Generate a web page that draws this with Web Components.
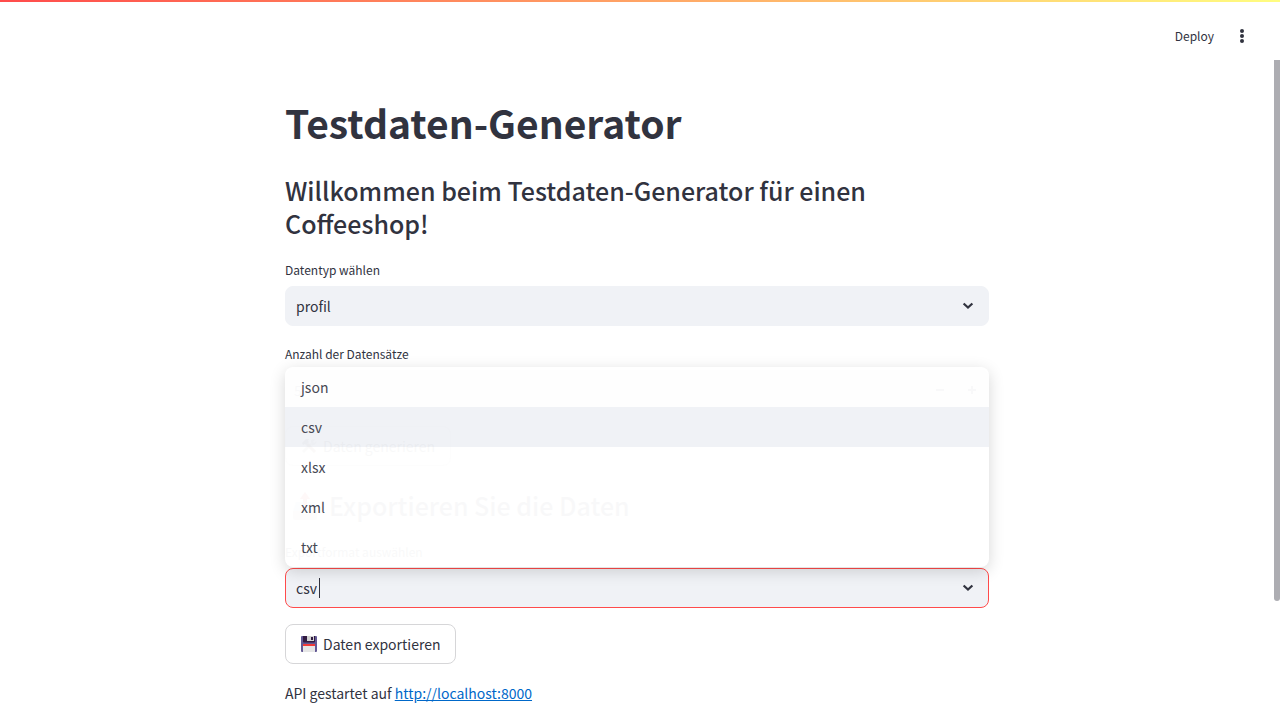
<!DOCTYPE html>
<html lang="de">
<head>
<meta charset="utf-8">
<meta name="viewport" content="width=device-width, initial-scale=1">
<title>Testdaten-Generator</title>
<style>
  :root {
    --ink: #31333f;
    --field: #f0f2f6;
    --accent: #ff4b4b;
    --size-text: 14px;
    --size-small: 12px;
  }
  body {
    margin: 0;
    background: #fff;
    color: var(--ink);
    font-family: "Noto Sans CJK SC", "Noto Sans", sans-serif;
    font-size: var(--size-text);
    line-height: 26px;
  }
</style>
</head>
<body>
<app-shell>
  <app-toolbar slot="toolbar"></app-toolbar>
  <page-heading level="1">Testdaten-Generator</page-heading>
  <page-heading level="3">Willkommen beim Testdaten-Generator für einen Coffeeshop!</page-heading>
  <select-field label="Datentyp wählen" value="profil"></select-field>
  <number-field label="Anzahl der Datensätze" value="5"></number-field>
  <action-button icon="tools">Daten generieren</action-button>
  <page-heading level="3" class="section" icon="outbox">Exportieren Sie die Daten</page-heading>
  <combo-field label="Exportformat auswählen" value="csv" options="json,csv,xlsx,xml,txt"></combo-field>
  <action-button icon="floppy">Daten exportieren</action-button>
  <api-note href="http://localhost:8000">API gestartet auf</api-note>
</app-shell>

<script>
const ICONS = {
  chevron: '<svg width="12" height="8" viewBox="0 0 12 8" aria-hidden="true"><path d="M1.600 1.500 6 5.600l4.400-4.100" fill="none" stroke="#31333f" stroke-width="2.200"/></svg>',
  floppy: '<svg width="16" height="16" viewBox="0 0 16 16" aria-hidden="true"><path d="M1 0h14a1 1 0 0 1 1 1v14a1 1 0 0 1-1 1H1a1 1 0 0 1-1-1V1a1 1 0 0 1 1-1z" fill="#635994"/><path d="M2 0h12v5.500a1 1 0 0 1-1 1H3a1 1 0 0 1-1-1z" fill="#321b41"/><path d="M6 0h7v5H6z" fill="#d3d3d3"/><path d="M10 1h2v3h-2z" fill="#321b41"/><path d="M2 8h12v8H2z" fill="#e6e6e6"/><path d="M2 8h12v2H2z" fill="#f03a38"/></svg>',
  tools: '<svg width="16" height="16" viewBox="0 0 16 16" aria-hidden="true"><path d="m2 14 8-8" stroke="#9b9b9b" stroke-width="2.500"/><path d="M10 2.500a4 4 0 0 1 4-1L12 4l1 1 2.500-2a4 4 0 0 1-5 4z" fill="#9b9b9b"/><path d="m6 6 8 8" stroke="#8a5a44" stroke-width="3"/><path d="M1 5 5 1h3L7 3l1 1-3 3-1-1-2 1z" fill="#636363"/></svg>',
  outbox: '<svg width="24" height="28" viewBox="0 0 24 28" aria-hidden="true"><path d="M3 10h18l3 10H0z" fill="#b4d8ef"/><path d="M0 19h7l2 3h6l2-3h7v7a2 2 0 0 1-2 2H2a2 2 0 0 1-2-2z" fill="#c9b9b9"/><path d="M12 0 7 7h3v10h4V7h3z" fill="#f8312f"/></svg>'
};

class Base extends HTMLElement {
  connectedCallback() {
    const root = this.attachShadow({ mode: 'open' });
    root.innerHTML = `<style>*{box-sizing:border-box}${this.styles()}</style>${this.markup()}`;
  }
  attr(name) { return this.getAttribute(name) || ''; }
}

const FIELD = `
  :host { display: block; position: relative; }
  label { display: block; height: 24px; margin-bottom: 4px; font-size: var(--size-small); line-height: 24px; }
  .box { position: relative; display: flex; align-items: center; height: 40px; border: 1px solid var(--field); border-radius: 8px; background: var(--field); }
  select, input { font: inherit; color: inherit; background: none; border: 0; outline: 0; margin: 0; }
`;

customElements.define('app-shell', class extends Base {
  styles() { return `
    :host { display: flex; flex-direction: column; height: 100vh; overflow: hidden; }
    .stripe { flex: none; height: 2px; background: linear-gradient(90deg, #ff4b4b, #fffd80); }
    .body { flex: 1; min-height: 0; display: grid; grid-template-columns: minmax(0, 1fr) 6px; }
    .thumb { height: 82%; border-radius: 0 0 4px 4px; background: #adadb2; }
    main { display: flex; flex-direction: column; gap: 16px; width: 100%; max-width: 736px; margin: 0 auto; padding: 36px 16px 0; box-sizing: border-box; }
    ::slotted(.section) { padding-top: 7px; }
  `; }
  markup() { return `<div class="stripe"></div><slot name="toolbar"></slot>
    <div class="body"><main><slot></slot></main><div class="thumb" aria-hidden="true"></div></div>`; }
});

customElements.define('app-toolbar', class extends Base {
  styles() { return `
    :host { display: flex; justify-content: flex-end; align-items: center; gap: 18px; flex: none; height: 58px; padding: 10px 28px 0 16px; box-sizing: border-box; }
    button { display: flex; align-items: center; justify-content: center; height: 28px; padding: 0; border: 0; background: none; color: inherit; font: inherit; font-size: var(--size-small); line-height: 24px; }
    .menu { width: 20px; }
  `; }
  markup() { return `<button type="button">Deploy</button>
    <button type="button" class="menu" aria-label="Menü"><svg width="4" height="14" viewBox="0 0 4 14" fill="#31333f"><circle cx="2" cy="2" r="2"/><circle cx="2" cy="7" r="2"/><circle cx="2" cy="12" r="2"/></svg></button>`; }
});

customElements.define('page-heading', class extends Base {
  styles() { return `
    :host { display: block; }
    h1, h3 { margin: 0; display: flex; align-items: center; gap: 12px; }
    h1 { font-size: 39px; font-weight: 700; line-height: 53px; padding-bottom: 9px; }
    h3 { font-size: 25px; font-weight: 500; line-height: 33px; padding-bottom: 2px; }
    svg { flex: none; margin-left: 8px; }
  `; }
  markup() { const h = 'h' + this.attr('level'); return `<${h}>${ICONS[this.attr('icon')] || ''}<span><slot></slot></span></${h}>`; }
});

customElements.define('select-field', class extends Base {
  styles() { return FIELD + `
    select { appearance: none; width: 100%; height: 38px; padding: 0 40px 0 10px; }
    svg { position: absolute; right: 14px; pointer-events: none; }
  `; }
  markup() { return `<label for="f">${this.attr('label')}</label>
    <div class="box"><select id="f"><option>${this.attr('value')}</option></select>${ICONS.chevron}</div>`; }
});

customElements.define('number-field', class extends Base {
  styles() { return FIELD + `
    input { flex: 1; min-width: 0; height: 38px; padding: 0 8px; appearance: textfield; }
    input::-webkit-inner-spin-button { appearance: none; }
    button { width: 32px; height: 38px; padding: 0; border: 0; background: none; display: grid; place-items: center; }
  `; }
  markup() { return `<label for="f">${this.attr('label')}</label>
    <div class="box"><input id="f" type="number" value="${this.attr('value')}">
      <button type="button" aria-label="Weniger"><svg width="8" height="8"><path d="M0 4h8" stroke="#31333f" stroke-width="2"/></svg></button>
      <button type="button" aria-label="Mehr"><svg width="8" height="8"><path d="M0 4h8M4 0v8" stroke="#31333f" stroke-width="2"/></svg></button></div>`; }
});

customElements.define('combo-field', class extends Base {
  styles() { return FIELD + `
    .box { border-color: var(--accent); }
    input { field-sizing: content; height: 38px; padding: 0 0 0 10px; }
    .caret { width: 1px; height: 20px; margin-left: 2px; background: var(--ink); }
    svg { margin-left: auto; margin-right: 14px; }
    ul { position: absolute; left: 0; right: 0; bottom: 41px; margin: 0; padding: 0; list-style: none; overflow: hidden; border-radius: 8px; background: #fff; box-shadow: 0 4px 16px rgba(0, 0, 0, .16); opacity: .97; }
    li { height: 40px; padding: 0 16px; line-height: 40px; color: #42444f; }
    li[aria-selected="true"] { background: var(--field); }
  `; }
  markup() {
    const v = this.attr('value');
    const items = this.attr('options').split(',').map(o => `<li role="option" aria-selected="${o === v}">${o}</li>`).join('');
    return `<label for="f">${this.attr('label')}</label>
      <div class="box"><input id="f" type="text" role="combobox" aria-expanded="true" aria-controls="list" value="${v}"><span class="caret"></span>${ICONS.chevron}</div>
      <ul id="list" role="listbox" aria-label="${this.attr('label')}">${items}</ul>`;
  }
});

customElements.define('action-button', class extends Base {
  styles() { return `
    :host { display: flex; }
    button { display: flex; align-items: center; gap: 6px; height: 40px; padding: 0 15px; border: 1px solid #d6d6d8; border-radius: 8px; background: #fff; color: inherit; font: inherit; }
  `; }
  markup() { return `<button type="button">${ICONS[this.attr('icon')]}<span><slot></slot></span></button>`; }
});

customElements.define('api-note', class extends Base {
  styles() { return `:host { display: block; } p { margin: 0; } a { color: #0068c9; text-decoration: underline; }`; }
  markup() { const h = this.attr('href'); return `<p><slot></slot> <a href="${h}">${h}</a></p>`; }
});
</script>
</body>
</html>
